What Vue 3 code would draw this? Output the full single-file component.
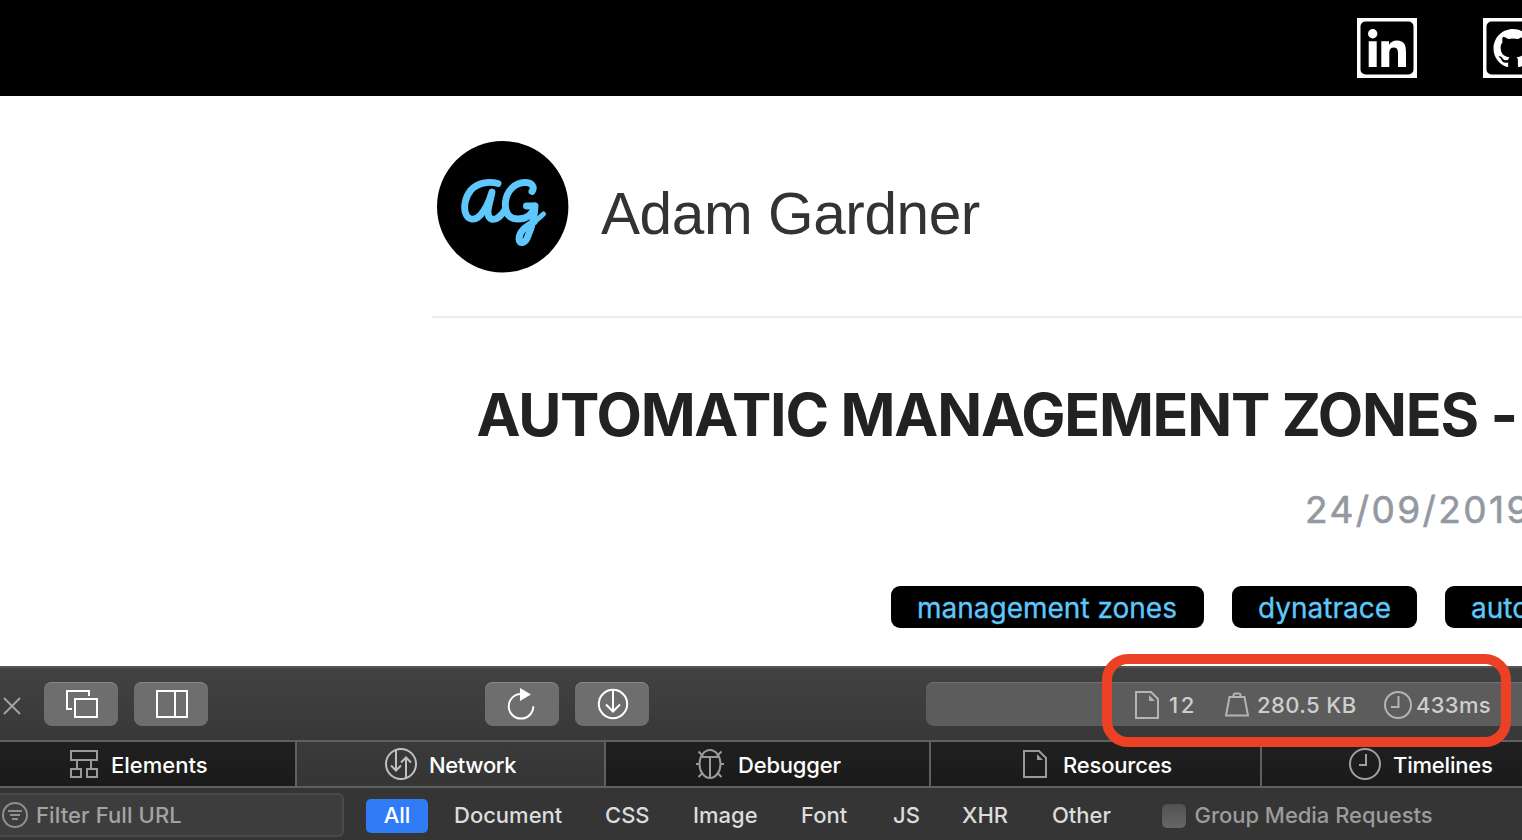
<script setup>
const tabs = [
  { name: 'Elements', icon: 'elements' },
  { name: 'Network', icon: 'network' },
  { name: 'Debugger', icon: 'debugger' },
  { name: 'Resources', icon: 'resources' },
  { name: 'Timelines', icon: 'timelines' },
]
const filters = ['All', 'Document', 'CSS', 'Image', 'Font', 'JS', 'XHR', 'Other']
</script>

<template>
  <div class="screen">
    <header class="topbar">
      <svg class="social" width="60" height="60" viewBox="0 0 60 60">
        <rect width="60" height="60" fill="#fff" />
        <rect x="3.5" y="3.5" width="53" height="53" rx="5" fill="#000" />
        <circle cx="15.7" cy="15.7" r="4.7" fill="#fff" />
        <path fill="#fff" d="M11.7 23.3h8V49h-8zM24.3 23.3H32v3.6c1.4-2.6 4.300-4.300 7.800-4.300 7.700 0 9.200 5 9.200 11.800V49h-8V36c0-3.200-.2-6.500-4.200-6.500s-4.500 3.300-4.500 6.500v13h-8z" />
      </svg>
      <svg class="social" width="60" height="60" viewBox="0 0 60 60">
        <rect width="60" height="60" fill="#fff" />
        <rect x="3.5" y="3.500" width="53" height="53" rx="5" fill="#000" />
        <g transform="translate(10.500 11) scale(2.440)">
          <path fill="#fff" d="M8 0C3.580 0 0 3.580 0 8c0 3.540 2.290 6.530 5.470 7.590.4.070.55-.17.55-.38 0-.19-.01-.82-.01-1.490-2.010.37-2.530-.49-2.690-.94-.09-.23-.48-.94-.82-1.130-.28-.15-.68-.52-.01-.53.63-.01 1.080.58 1.230.82.72 1.210 1.870.87 2.330.66.07-.52.28-.87.51-1.070-1.780-.2-3.640-.89-3.640-3.950 0-.87.31-1.590.82-2.150-.08-.2-.36-1.020.08-2.120 0 0 .67-.21 2.200.82.64-.18 1.320-.27 2-.27s1.360.09 2 .27c1.530-1.040 2.200-.82 2.200-.82.44 1.100.16 1.920.08 2.120.51.56.82 1.270.82 2.150 0 3.070-1.870 3.750-3.650 3.950.29.25.54.73.54 1.480 0 1.070-.01 1.930-.01 2.200 0 .21.15.46.55.38A8.010 8.010 0 0 0 16 8c0-4.420-3.580-8-8-8z" />
        </g>
      </svg>
    </header>

    <main class="page">
      <div class="brand">
        <svg width="132" height="132" viewBox="0 0 132 132">
          <circle cx="65.700" cy="65.700" r="65.700" fill="#000" />
          <g fill="none" stroke="#5ec7fb" stroke-width="6.900" stroke-linecap="round" stroke-linejoin="round">
            <path d="M61 42.500C51 39.800 40.500 42 34 49C28 56 26.500 66 28.500 72C31 79.500 38 80 43.500 74C49.500 67.500 53 58 55 51C53.500 60 50.500 67 51 72C51.500 79 57 80 62 76C65 73.500 67 71 68.500 68" />
            <path d="M95 50.500C98 46 95 41.500 88 41.500C78 41.500 69.500 50 68.500 61C67.500 72 72 78 81 78C90.500 78 96 73 97.500 65H89.500" />
            <path d="M98 65C97.500 76 94 88 91 95C88.500 103 82 103.500 82 98C82 90 91 84 97 81" />
            <path d="M94 82.500C99 80 103.500 76 106.500 73" stroke-width="5" />
          </g>
        </svg>
        <div class="brand-name">Adam Gardner</div>
      </div>
      <h1 class="title">AUTOMATIC MANAGEMENT ZONES -</h1>
      <div class="date">24/09/2019</div>
      <div class="tags">
        <span class="tag t1">management zones</span>
        <span class="tag t2">dynatrace</span>
        <span class="tag t3">auto</span>
      </div>
    </main>

    <section class="inspector">
      <div class="toolbar">
        <svg class="close" width="18" height="18" viewBox="0 0 18 18"><path d="M1 1l16 16M17 1L1 17" stroke="#a2a2a2" stroke-width="2" /></svg>
        <div class="btn b1">
          <svg width="74" height="44" fill="none" stroke="#fff" stroke-width="2"><path d="M28 27H23V9H45V14M31 17H53V35H31z" /></svg>
        </div>
        <div class="btn b2">
          <svg width="74" height="44" fill="none" stroke="#fff" stroke-width="2"><path d="M23 9H53V35H23zM41 9V35" /></svg>
        </div>
        <div class="btn b3">
          <svg width="74" height="44" fill="none" stroke="#fff" stroke-width="2"><path d="M36 12A12.300 12.300 0 1 0 48.300 24.300" /><path d="M35 6L46 12.500L35 19z" fill="#fff" stroke="none" /></svg>
        </div>
        <div class="btn b4">
          <svg width="74" height="44" fill="none" stroke="#fff" stroke-width="2"><circle cx="38" cy="22" r="14.200" /><path d="M38 8V29M31 22.500L38 29.500L45 22.500" /></svg>
        </div>
        <div class="dash">
          <svg class="doc" width="24" height="28" viewBox="0 0 24 28"><path d="M1 1H16L23 8V27H1z" fill="none" stroke="#b4b4b4" stroke-width="2" /><path d="M14 4V10H20z" fill="#b4b4b4" /></svg>
          <span class="s1">12</span>
          <svg class="weight" width="24" height="25" viewBox="0 0 24 25" fill="none" stroke="#b4b4b4" stroke-width="2"><path d="M4.500 5H19.500L23 23.500H1zM8.500 5V3.500Q8.500 1.500 10.500 1.500H13.500Q15.500 1.500 15.500 3.500V5" /></svg>
          <span class="s2">280.5 KB</span>
          <svg class="clock" width="28" height="28" viewBox="0 0 28 28" fill="none" stroke="#b4b4b4" stroke-width="2"><circle cx="14" cy="14" r="13" /><path d="M14.500 5V16H7" /></svg>
          <span class="s3">433ms</span>
        </div>
      </div>

      <nav class="tabs">
        <div v-for="t in tabs" :key="t.name" class="tab" :class="t.icon">
          <svg v-if="t.icon === 'elements'" width="32" height="32" fill="none" stroke="#9a9a9a" stroke-width="2"><path d="M3 3H29V12H3zM9 13V21M23 13V21M3 21H13V29H3zM19 21H29V29H19z" /></svg>
          <svg v-else-if="t.icon === 'network'" width="32" height="32" fill="none" stroke="#c0c0c0" stroke-width="2"><circle cx="16" cy="16" r="15" /><path d="M11 2V22M6 17.500L11 22.500L16 17.500M21 30V10M16 14.500L21 9.500L26 14.500" /></svg>
          <svg v-else-if="t.icon === 'debugger'" width="32" height="32" fill="none" stroke="#9a9a9a" stroke-width="2"><ellipse cx="16" cy="16" rx="10.500" ry="14" /><path d="M8 9H24M16 9V30M2 16H6M26 16H30M4.500 3.500L9 8M27.500 3.500L23 8M4.500 29L9 24.500M27.500 29L23 24.500" /></svg>
          <svg v-else-if="t.icon === 'resources'" width="32" height="32"><path d="M5 3H20L27 10V29H5z" fill="none" stroke="#9a9a9a" stroke-width="2" /><path d="M18 6V12H24z" fill="#9a9a9a" /></svg>
          <svg v-else width="32" height="32" fill="none" stroke="#a0a0a0" stroke-width="2"><circle cx="16" cy="16" r="15" /><path d="M17 6V17H10" /></svg>
          <span>{{ t.name }}</span>
        </div>
      </nav>

      <div class="filterbar">
        <div class="search">
          <svg width="26" height="26" fill="none" stroke="#8e8e8e" stroke-width="2"><circle cx="13" cy="13" r="12" /><path d="M6 9H20M8 13H18M10 17H16" /></svg>
          <span>Filter Full URL</span>
        </div>
        <div class="filters">
          <span v-for="f in filters" :key="f" class="filter" :class="f.toLowerCase()">{{ f }}</span>
        </div>
        <span class="check"></span>
        <span class="group">Group Media Requests</span>
      </div>
      <div class="callout"></div>
    </section>
  </div>
</template>

<style>
body { margin: 0; background: #fff; overflow: hidden; }
</style>

<style scoped>
.screen { width: 1522px; height: 840px; overflow: hidden; display: flex; flex-direction: column; font-family: Inter, "Liberation Sans", sans-serif; white-space: nowrap; }
svg { display: block; flex: none; }
.topbar { height: 96px; flex: none; background: #000; display: flex; align-items: flex-start; gap: 66px; padding: 18px 0 0 1357px; box-sizing: border-box; }
.page { height: 570px; flex: none; overflow: hidden; }
.brand { margin-left: 432px; height: 222px; box-sizing: border-box; border-bottom: 2px solid #ededee; padding: 45px 0 0 5px; display: flex; }
.brand-name { margin-left: 32px; margin-top: 39px; font: 58.5px/68px "Liberation Sans", Arial, sans-serif; color: #333; letter-spacing: -0.4px; }
.title { margin: 60px 0 0 476.500px; font-size: 59px; line-height: 73px; font-weight: 700; color: #222; letter-spacing: -1.230px; }
.date { margin: 34px 0 0 1305px; font-size: 37px; line-height: 50px; color: #9399a1; letter-spacing: 2.400px; -webkit-text-stroke: 0.600px #9399a1; }
.tags { display: flex; gap: 28px; margin: 51px 0 0 891px; }
.tag { flex: none; height: 42px; line-height: 45px; box-sizing: border-box; border-radius: 9px; background: #000; color: #5ec7fb; font-size: 28px; padding-left: 26px; -webkit-text-stroke: 0.300px #5ec7fb; }
.t1 { width: 313px; }
.t2 { width: 185px; }
.t3 { width: 210px; }

.inspector { position: relative; height: 174px; flex: none; background: #353535; }
.toolbar { height: 76px; box-sizing: border-box; border-top: 2px solid #555; border-bottom: 2px solid #606060; background: linear-gradient(#424242, #383838); display: flex; align-items: flex-start; padding: 14px 0 0 3px; }
.close { margin-top: 15px; }
.btn { width: 74px; height: 44px; border-radius: 8px; background: #6e6e6e; box-shadow: inset 0 1px 0 #868686; flex: none; }
.b1 { margin-left: 23px; }
.b2 { margin-left: 16px; }
.b3 { margin-left: 277px; }
.b4 { margin-left: 16px; }
.dash { margin-left: 277px; width: 620px; height: 44px; flex: none; box-sizing: border-box; border-radius: 8px; background: #5c5c5c; box-shadow: inset 0 1px 0 #707070; display: flex; align-items: center; color: #cecece; font-size: 22px; line-height: 44px; letter-spacing: 0.400px; font-weight: 500; padding: 1px 0 0 209px; }
.dash span { flex: none; }
.s1 { width: 56px; margin-left: 10px; letter-spacing: 2.500px; }
.s2 { width: 120px; margin-left: 8px; }
.clock { margin-left: 7px; margin-top: 1px; }
.s3 { margin-left: 4px; letter-spacing: 0.300px; }

.tabs { display: grid; grid-template-columns: 297px 309px 325px 331px 260px; height: 46px; border-bottom: 2px solid #606060; box-sizing: border-box; }
.tab { height: 44px; box-sizing: border-box; border-right: 2px solid #606060; background: linear-gradient(#202020, #1a1a1a); color: #fff; font-size: 22px; line-height: 46px; font-weight: 500; letter-spacing: -0.200px; display: flex; align-items: flex-start; }
.tab svg { margin-top: 6px; margin-right: 12px; }
.elements { padding-left: 68px; letter-spacing: 0; }
.elements svg { margin-right: 11px; }
.network { padding-left: 88px; letter-spacing: -0.350px; background: linear-gradient(#3a3a3a, #353535); }
.debugger { padding-left: 88px; }
.resources { padding-left: 88px; }
.timelines { padding-left: 87px; border-right: 0; }

.filterbar { height: 52px; display: flex; align-items: flex-start; font-size: 22px; font-weight: 500; color: #dcdcdc; }
.search { width: 344px; height: 44px; margin-top: 5px; flex: none; box-sizing: border-box; border: 2px solid #4a4a4a; border-left: 0; border-radius: 0 6px 6px 0; background: #3d3d3d; display: flex; align-items: center; padding-left: 2px; color: #a3a3a3; line-height: 40px; letter-spacing: 0.100px; }
.search span { margin-left: 8px; }
.filters { display: flex; width: 818px; flex: none; line-height: 33px; margin-top: 11px; letter-spacing: 0; }
.filter { flex: none; }
.all { width: 62px; height: 34px; border-radius: 5px; background: #2f7cf6; color: #fff; margin-left: 22px; text-align: center; }
.document { margin-left: 26px; width: 151px; }
.css { width: 88px; }
.image { width: 108px; }
.font { width: 92px; }
.js { width: 69px; }
.xhr { width: 90px; }
.check { width: 24px; height: 24px; margin-top: 16px; border-radius: 5px; background: linear-gradient(#525252, #666); box-shadow: 0 0 1px #222; flex: none; }
.group { margin-left: 8.500px; line-height: 54px; color: #9c9c9c; letter-spacing: -0.030px; }
.callout { position: absolute; left: 1102px; top: -12px; width: 409px; height: 93px; box-sizing: border-box; border: 10px solid #ed4126; border-radius: 26px; }
</style>
